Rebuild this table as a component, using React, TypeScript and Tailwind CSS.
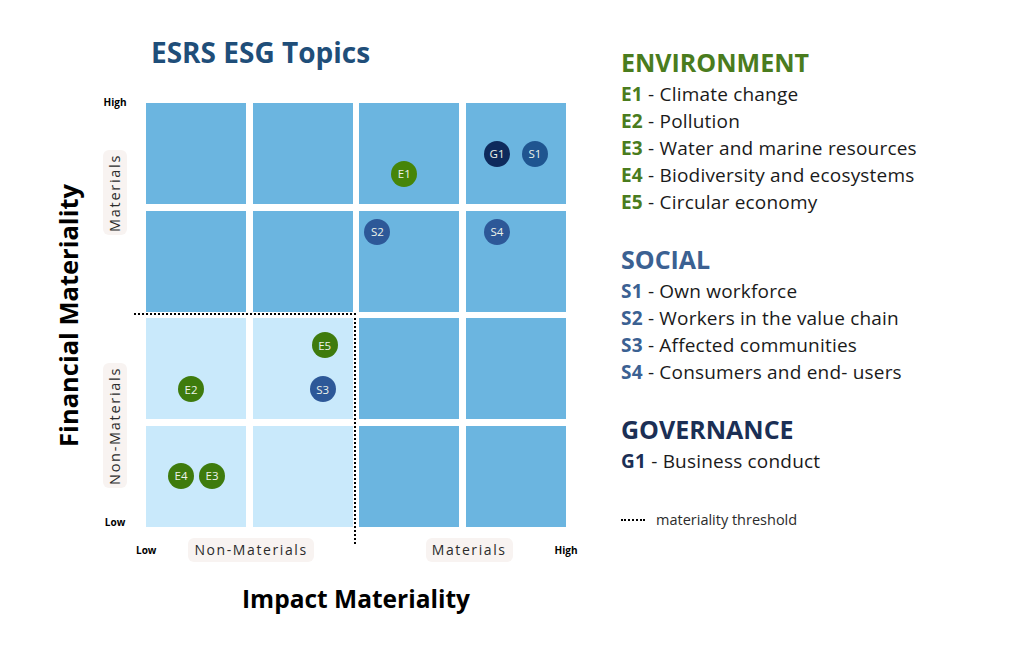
import React from "react";

type Dot = { code: string; color: string; left: number; top: number };
type Cell = { light: boolean; dots: Dot[] };

const GREEN = "#3e7b0d";
const BLUE = "#2d5898";

// row by row, top (high financial) to bottom (low)
const cells: Cell[] = [
  { light: false, dots: [] },
  { light: false, dots: [] },
  { light: false, dots: [{ code: "E1", color: "#468509", left: 32, top: 58 }] },
  {
    light: false,
    dots: [
      { code: "G1", color: "#0e2a5c", left: 18, top: 38 },
      { code: "S1", color: "#1f5590", left: 56, top: 38 },
    ],
  },
  { light: false, dots: [] },
  { light: false, dots: [] },
  { light: false, dots: [{ code: "S2", color: BLUE, left: 5, top: 8 }] },
  { light: false, dots: [{ code: "S4", color: BLUE, left: 18, top: 8 }] },
  { light: true, dots: [{ code: "E2", color: GREEN, left: 32, top: 58 }] },
  {
    light: true,
    dots: [
      { code: "E5", color: GREEN, left: 59, top: 14 },
      { code: "S3", color: BLUE, left: 57, top: 58 },
    ],
  },
  { light: false, dots: [] },
  { light: false, dots: [] },
  {
    light: true,
    dots: [
      { code: "E4", color: GREEN, left: 22, top: 37 },
      { code: "E3", color: GREEN, left: 53, top: 37 },
    ],
  },
  { light: true, dots: [] },
  { light: false, dots: [] },
  { light: false, dots: [] },
];

const legend = [
  {
    title: "ENVIRONMENT",
    color: "#4a7c1e",
    items: [
      ["E1", "Climate change"],
      ["E2", "Pollution"],
      ["E3", "Water and marine resources"],
      ["E4", "Biodiversity and ecosystems"],
      ["E5", "Circular economy"],
    ],
  },
  {
    title: "SOCIAL",
    color: "#3b6192",
    items: [
      ["S1", "Own workforce"],
      ["S2", "Workers in the value chain"],
      ["S3", "Affected communities"],
      ["S4", "Consumers and end- users"],
    ],
  },
  {
    title: "GOVERNANCE",
    color: "#1b2f55",
    items: [["G1", "Business conduct"]],
  },
];

const Pill = ({ text }: { text: string }) => (
  <span className="rounded-md bg-[#f8f3f1] px-[6px] h-[24px] flex items-center text-[14px] leading-[24px] tracking-[1.6px] text-[#2b2b2b]">
    {text}
  </span>
);

const VPill = ({ text, length }: { text: string; length: string }) => (
  <span className={`rounded-md bg-[#f8f3f1] w-[24px] ${length} flex items-center justify-center`}>
    <span className="[writing-mode:vertical-rl] rotate-180 text-[14.5px] leading-[24px] tracking-[1.7px] text-[#2b2b2b] whitespace-nowrap">
      {text}
    </span>
  </span>
);

export default function App() {
  return (
    <div className="w-[1024px] h-[658px] bg-white flex font-['Open_Sans',sans-serif] text-[#1a1a1a]">
      {/* chart */}
      <div className="w-[600px] flex flex-col">
        <h1 className="pt-[34px] pl-[151px] text-[28px] leading-[36px] font-bold text-[#1f4e79]">ESRS ESG Topics</h1>

        <div className="flex mt-[25px]">
          <div className="w-[100px] pt-[8px]">
            <div className="h-[424px] flex items-center pl-[56px]">
              <span className="[writing-mode:vertical-rl] rotate-180 text-[25.5px] leading-[25px] font-bold text-black whitespace-nowrap">
                Financial Materiality
              </span>
            </div>
          </div>

          <div className="w-[30px] flex flex-col items-center">
            <span className="text-[10px] leading-[14px] font-bold text-black">High</span>
            <div className="mt-[41px]">
              <VPill text="Materials" length="h-[85px]" />
            </div>
            <div className="mt-[128px]">
              <VPill text="Non-Materials" length="h-[125px]" />
            </div>
            <span className="mt-[27px] text-[10px] leading-[14px] font-bold text-black">Low</span>
          </div>

          <div className="ml-[16px] mt-[8px] relative">
            <div className="grid grid-cols-4 gap-[6.67px] w-[420px]">
              {cells.map((cell, i) => (
                <div key={i} className={`relative h-[101px] ${cell.light ? "bg-[#c9e9fb]" : "bg-[#6bb5e0]"}`}>
                  {cell.dots.map((d) => (
                    <span
                      key={d.code}
                      className="absolute w-[26px] h-[26px] rounded-full flex items-center justify-center text-[11.5px] text-[#eef3ea]"
                      style={{ left: d.left, top: d.top, backgroundColor: d.color }}
                    >
                      {d.code}
                    </span>
                  ))}
                </div>
              ))}
            </div>
            {/* materiality threshold */}
            <div className="absolute left-[-12px] top-[210px] w-[222px] border-t-2 border-dotted border-black" />
            <div className="absolute left-[208px] top-[210px] h-[231px] border-l-2 border-dotted border-black" />
          </div>
        </div>

        <div className="flex items-center pl-[136px] mt-[9px]">
          <span className="text-[10px] leading-[14px] font-bold text-black">Low</span>
          <div className="ml-[32px]">
            <Pill text="Non-Materials" />
          </div>
          <div className="ml-[112px]">
            <Pill text="Materials" />
          </div>
          <span className="ml-[42px] text-[10px] leading-[14px] font-bold text-black">High</span>
        </div>

        <div className="ml-[146px] w-[420px] mt-[22px] text-center text-[24.5px] leading-[30px] font-bold text-black">
          Impact Materiality
        </div>
      </div>

      {/* legend */}
      <div className="pl-[21px] pt-[47px] flex flex-col">
        {legend.map((g, gi) => (
          <div key={g.title} className={gi > 0 ? "mt-[28px]" : ""}>
            <h2 className="text-[25px] leading-[30px] font-bold mb-[4px]" style={{ color: g.color }}>
              {g.title}
            </h2>
            {g.items.map(([code, label]) => (
              <p key={code} className="text-[19px] leading-[27px] tracking-[0.2px]">
                <span className="font-bold" style={{ color: g.color }}>
                  {code}
                </span>{" "}
                - {label}
              </p>
            ))}
          </div>
        ))}
        <div className="mt-[36px] flex items-center gap-[11px]">
          <span className="w-[24px] border-t-2 border-dotted border-black" />
          <span className="text-[14.5px] leading-[18px] text-[#2b2b2b]">materiality threshold</span>
        </div>
      </div>
    </div>
  );
}
